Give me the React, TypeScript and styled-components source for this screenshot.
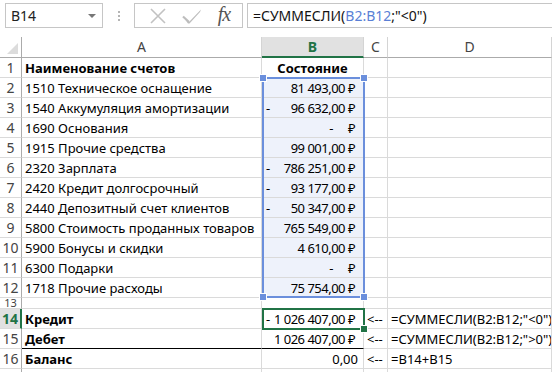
import React from "react";
import styled, {createGlobalStyle, css} from "styled-components";

const Global = createGlobalStyle`
  html, body { margin: 0; padding: 0; background: #fff; }
  body { width: 552px; height: 372px; overflow: hidden; font-family: "Noto Sans", "Open Sans", sans-serif; }
`;

const GREEN = "#217346";
const SEL = "#6b8fdc";
const GRID = "#dadada";

// formula bar
const FormulaBar = styled.div`
  height: 37px;
  display: flex;
  align-items: flex-start;
  padding: 3px 0 0 5px;
  box-sizing: border-box;
`;

const NameBox = styled.div`
  width: 98px;
  height: 25px;
  border: 1px solid #c6c6c6;
  box-sizing: border-box;
  display: flex;
  align-items: center;
  justify-content: space-between;
  padding: 0 6px 1px 5px;
  font-size: 14px;
  color: #222;
`;

const DropArrow = styled.span`
  width: 0;
  height: 0;
  border-left: 4px solid transparent;
  border-right: 4px solid transparent;
  border-top: 4px solid #777;
  margin-top: 2px;
`;

const Dots = styled.div`
  width: 31px;
  height: 25px;
  display: flex;
  flex-direction: column;
  align-items: center;
  justify-content: center;
  gap: 2px;
  span {
    width: 2px;
    height: 2px;
    background: #b5b5b5;
  }
`;

const ButtonGroup = styled.div`
  width: 109px;
  height: 25px;
  border: 1px solid #c6c6c6;
  box-sizing: border-box;
  display: flex;
  align-items: center;
  justify-content: space-around;
  padding: 0 4px 0 6px;
`;

const Fx = styled.span`
  font-family: "Liberation Serif", "DejaVu Serif", serif;
  font-style: italic;
  font-size: 20px;
  color: #555;
  letter-spacing: -1px;
  margin-top: -2px;
`;

const FormulaInput = styled.div`
  flex: 1;
  height: 25px;
  margin-left: 4px;
  border: 1px solid #c6c6c6;
  border-right: none;
  box-sizing: border-box;
  font-size: 14px;
  color: #111;
  display: flex;
  align-items: center;
  padding: 0 0 1px 5px;
`;

const Ref = styled.span`
  color: #5a7fd6;
`;

// sheet grid
const Sheet = styled.div`
  position: relative;
  display: grid;
  grid-template-columns: 22px 240px 102px 24px 1fr;
  grid-template-rows: 21px repeat(12, 20px) 11px repeat(3, 20px) 20px;
  font-size: 13px;
  color: #000;
`;

const ColHead = styled.div<{ $active?: boolean }>`
  box-sizing: border-box;
  border-right: 1px solid #d4d4d4;
  border-bottom: 1px solid #ababab;
  display: flex;
  align-items: center;
  justify-content: center;
  font-size: 14px;
  color: #444;
  padding-bottom: 1px;
  ${p => p.$active && css`
    background: #e1e1e1;
    color: ${GREEN};
    font-weight: bold;
    border-bottom: 2px solid ${GREEN};
    padding-bottom: 0;
  `}
`;

const Corner = styled.div`
  box-sizing: border-box;
  border-right: 1px solid #ababab;
  border-bottom: 1px solid #ababab;
  position: relative;
  &::after {
    content: "";
    position: absolute;
    right: 3px;
    bottom: 3px;
    border-left: 11px solid transparent;
    border-bottom: 11px solid #dcdcdc;
  }
`;

const RowHead = styled.div<{ $active?: boolean; $short?: boolean }>`
  box-sizing: border-box;
  border-right: 1px solid #ababab;
  border-bottom: 1px solid ${GRID};
  display: flex;
  align-items: center;
  justify-content: center;
  font-size: 14px;
  color: #444;
  overflow: hidden;
  line-height: 1;
  ${p => p.$short && css`
    font-size: 11px;
    align-items: flex-end;
  `}
  ${p => p.$active && css`
    background: #e1e1e1;
    color: ${GREEN};
    font-weight: bold;
    border-right: 2px solid ${GREEN};
  `}
`;

const Cell = styled.div<{ $bold?: boolean; $align?: string; $fill?: boolean; $thick?: boolean }>`
  box-sizing: border-box;
  border-right: 1px solid ${GRID};
  border-bottom: 1px solid ${GRID};
  display: flex;
  align-items: center;
  justify-content: ${p => p.$align || "flex-start"};
  padding: 0 3px 0 3px;
  white-space: nowrap;
  overflow: hidden;
  font-weight: ${p => (p.$bold ? "bold" : "normal")};
  background: ${p => (p.$fill ? "#eef2fb" : "transparent")};
  ${p => p.$thick && css`border-bottom: 1px solid #000;`}
`;

const Money = styled(Cell)`
  justify-content: space-between;
  padding: 0 8px 0 4px;
  letter-spacing: -0.5px;
`;

const Plain = styled(Cell)`
  justify-content: flex-end;
  padding-right: 5px;
`;

const Zero = styled.span`
  margin-right: 15px;
`;

const Selection = styled.div`
  position: absolute;
  left: 262px;
  top: 40px;
  width: 103px;
  height: 221px;
  box-sizing: border-box;
  border: 2px solid ${SEL};
  pointer-events: none;
`;

const Handle = styled.span<{ $x: "l" | "r"; $y: "t" | "b"; $color: string }>`
  position: absolute;
  width: 6px;
  height: 6px;
  background: ${p => p.$color};
  border: 1px solid #fff;
  ${p => (p.$x === "l" ? "left: -5px;" : "right: -5px;")}
  ${p => (p.$y === "t" ? "top: -5px;" : "bottom: -5px;")}
`;

const Active = styled.div`
  position: absolute;
  left: 262px;
  top: 271px;
  width: 103px;
  height: 22px;
  box-sizing: border-box;
  border: 2px solid ${GREEN};
  pointer-events: none;
`;

type Row = { name: string; val: string | null; neg?: boolean };

const rows: Row[] = [
  {name: "1510 Техническое оснащение", val: "81 493,00 ₽"},
  {name: "1540 Аккумуляция амортизации", val: "96 632,00 ₽", neg: true},
  {name: "1690 Основания", val: null},
  {name: "1915 Прочие средства", val: "99 001,00 ₽"},
  {name: "2320 Зарплата", val: "786 251,00 ₽", neg: true},
  {name: "2420 Кредит долгосрочный", val: "93 177,00 ₽", neg: true},
  {name: "2440 Депозитный счет клиентов", val: "50 347,00 ₽", neg: true},
  {name: "5800 Стоимость проданных товаров", val: "765 549,00 ₽"},
  {name: "5900 Бонусы и скидки", val: "4 610,00 ₽"},
  {name: "6300 Подарки", val: null},
  {name: "1718 Прочие расходы", val: "75 754,00 ₽"},
];

function XIcon() {
  return (
    <svg width="18" height="16" viewBox="0 0 18 16">
      <path d="M2 1 L16 15 M16 1 L2 15" stroke="#c2c2c2" strokeWidth="1.6" fill="none"/>
    </svg>
  );
}

function CheckIcon() {
  return (
    <svg width="20" height="16" viewBox="0 0 20 16">
      <path d="M1 8.5 L7 14 L19 1.5 L18 4 L7.5 15.5 L6 15.5 Z" fill="#bdbdbd"/>
      <path d="M1 8.5 L7 14" stroke="#bdbdbd" strokeWidth="2.2"/>
    </svg>
  );
}

function Summary({label, value, neg, formula, thick}: { label: string; value: string; neg?: boolean; formula: string; thick?: boolean }) {
  return (
    <>
      <Cell $bold $thick={thick}>{label}</Cell>
      {neg !== undefined ? (
        <Money $thick={thick}><span>{neg ? "-" : ""}</span><span>{value}</span></Money>
      ) : (
        <Plain $thick={thick}>{value}</Plain>
      )}
      <Cell>&lt;--</Cell>
      <Cell>{formula}</Cell>
    </>
  );
}

export default function App() {
  return (
    <>
      <Global/>
      <FormulaBar>
        <NameBox>B14<DropArrow/></NameBox>
        <Dots><span/><span/><span/></Dots>
        <ButtonGroup>
          <XIcon/>
          <CheckIcon/>
          <Fx>fx</Fx>
        </ButtonGroup>
        <FormulaInput>=СУММЕСЛИ(<Ref>B2:B12</Ref>;"&lt;0")</FormulaInput>
      </FormulaBar>
      <Sheet>
        <Corner/>
        <ColHead>A</ColHead>
        <ColHead $active>B</ColHead>
        <ColHead>C</ColHead>
        <ColHead>D</ColHead>

        <RowHead>1</RowHead>
        <Cell $bold>Наименование счетов</Cell>
        <Cell $bold $align="center">Состояние</Cell>
        <Cell/>
        <Cell/>

        {rows.map((r, i) => (
          <React.Fragment key={i}>
            <RowHead>{i + 2}</RowHead>
            <Cell>{r.name}</Cell>
            <Money $fill>
              <span>{r.neg ? "-" : ""}</span>
              {r.val ? <span>{r.val}</span> : <span><Zero>-</Zero>₽</span>}
            </Money>
            <Cell/>
            <Cell/>
          </React.Fragment>
        ))}

        <RowHead $short>13</RowHead>
        <Cell/>
        <Cell/>
        <Cell/>
        <Cell/>

        <RowHead $active>14</RowHead>
        <Summary label="Кредит" neg value="1 026 407,00 ₽" formula={'=СУММЕСЛИ(B2:B12;"<0")'}/>
        <RowHead>15</RowHead>
        <Summary label="Дебет" neg={false} value="1 026 407,00 ₽" formula={'=СУММЕСЛИ(B2:B12;">0")'} thick/>
        <RowHead>16</RowHead>
        <Summary label="Баланс" value="0,00" formula="=B14+B15"/>
        <RowHead/>
        <Cell/>
        <Cell/>
        <Cell/>
        <Cell/>

        <Selection>
          <Handle $x="l" $y="t" $color={SEL}/>
          <Handle $x="r" $y="t" $color={SEL}/>
          <Handle $x="l" $y="b" $color={SEL}/>
          <Handle $x="r" $y="b" $color={SEL}/>
        </Selection>
        <Active>
          <Handle $x="r" $y="b" $color={GREEN}/>
        </Active>
      </Sheet>
    </>
  );
}
